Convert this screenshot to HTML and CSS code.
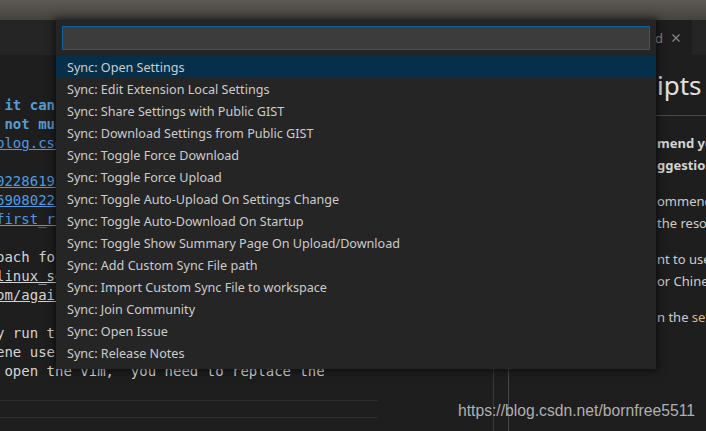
FILE: index.html
```html
<!DOCTYPE html>
<html lang="en">
<head>
    <meta charset="UTF-8">
    <meta name="viewport" content="width=device-width, initial-scale=1.0">
    <title>Sync - Command Palette</title>
    <link rel="stylesheet" href="styles.css">
</head>
<body>
    <div class="titlebar"></div>
    <div class="workbench">
        <div class="group group-left">
            <div class="tabs"></div>
            <div class="editor">
                <div class="code">
                    <div class="line"></div>
                    <div class="line"></div>
                    <div class="line bold"> it can save your settings to GitHub</div>
                    <div class="line bold"> not much to configure after install</div>
                    <div class="line link">blog.csdn.net/bornfree5511/article/details</div>
                    <div class="line"></div>
                    <div class="line link">0228619352/settings-sync-gist-token</div>
                    <div class="line link">6908022175/settings-sync-gist-token</div>
                    <div class="line link">first_run_settings_sync_extension</div>
                    <div class="line"></div>
                    <div class="line">oach for the vim extension in vscode</div>
                    <div class="line under">linux_setup_for_vim_keybindings</div>
                    <div class="line under">om/again/vscode-vim/issues/1024</div>
                    <div class="line"></div>
                    <div class="line">y run the command in the terminal</div>
                    <div class="line">ene use the keybindings file to</div>
                    <div class="line"> open the vim,  you need to replace the</div>
                    <div class="line"></div>
                    <div class="rule"></div>
                </div>
                <div class="scrollbar"></div>
            </div>
        </div>
        <div class="group group-right">
            <div class="tabs">
                <div class="tab">
                    <span class="tab-label">Preview README.md</span>
                    <svg class="tab-close" width="8" height="8" viewBox="0 0 8 8">
                        <path d="M0.5 0.5 L7.5 7.5 M7.5 0.5 L0.5 7.5" stroke="#8a8a8a" stroke-width="1.2" fill="none"/>
                    </svg>
                </div>
            </div>
            <div class="preview">
                <h1>ipts</h1>
                <hr>
                <p><b>mend your settings</b><br><b>ggestions are welcome</b></p>
                <p>ommended to sync<br>the resources folder</p>
                <p>nt to use the Chinese<br>or Chinese version</p>
                <p>n the <span class="code-span">settings.json</span></p>
            </div>
        </div>
    </div>

    <!-- 命令面板 -->
    <div class="quick-open">
        <div class="quick-input"></div>
        <ul class="quick-list">
            <li class="active">Sync: Open Settings</li>
            <li>Sync: Edit Extension Local Settings</li>
            <li>Sync: Share Settings with Public GIST</li>
            <li>Sync: Download Settings from Public GIST</li>
            <li>Sync: Toggle Force Download</li>
            <li>Sync: Toggle Force Upload</li>
            <li>Sync: Toggle Auto-Upload On Settings Change</li>
            <li>Sync: Toggle Auto-Download On Startup</li>
            <li>Sync: Toggle Show Summary Page On Upload/Download</li>
            <li>Sync: Add Custom Sync File path</li>
            <li>Sync: Import Custom Sync File to workspace</li>
            <li>Sync: Join Community</li>
            <li>Sync: Open Issue</li>
            <li>Sync: Release Notes</li>
        </ul>
    </div>

    <div class="watermark">https://blog.csdn.net/bornfree5511</div>
</body>
</html>
```

FILE: styles.css
```css
* {
    margin: 0;
    padding: 0;
    box-sizing: border-box;
}
body {
    width: 706px;
    height: 431px;
    overflow: hidden;
    position: relative;
    background-color: #1e1e1e;
    font-family: "Noto Sans", sans-serif;
}
.titlebar {
    height: 20px;
    background: linear-gradient(#5c5953, #45433f);
}
.workbench {
    display: flex;
    height: 411px;
}
.group {
    display: flex;
    flex-direction: column;
    overflow: hidden;
}
.group-left {
    width: 508px;
}
.group-right {
    flex: 1;
    border-left: 1px solid #474747;
}
.tabs {
    height: 35px;
    background-color: #252526;
    display: flex;
}
.editor {
    flex: 1;
    display: flex;
}
/* 左侧代码区 */
.code {
    flex: 1;
    overflow: hidden;
    padding-top: 3px;
    font-family: "DejaVu Sans Mono", monospace;
    font-size: 14px;
    color: #d4d4d4;
}
.line {
    height: 19px;
    line-height: 19px;
    margin-left: -4px;
    white-space: pre;
}
.line.bold {
    color: #569cd6;
    font-weight: bold;
}
.line.link {
    color: #4f9ae0;
    text-decoration: underline;
}
.line.under {
    text-decoration: underline;
}
.rule {
    width: 378px;
    height: 18px;
    border-top: 1px solid #2c2c2c;
    border-bottom: 1px solid #2c2c2c;
}
.scrollbar {
    width: 15px;
    border-left: 1px solid #383838;
}
/* 右侧预览 */
.tab {
    width: 183px;
    height: 35px;
    background-color: #1e1e1e;
    display: flex;
    align-items: center;
    justify-content: flex-end;
    padding-right: 12px;
    white-space: nowrap;
    overflow: hidden;
}
.tab-label {
    font-size: 13px;
    color: #8a8a8a;
}
.tab-close {
    margin-left: 9px;
    flex-shrink: 0;
}
.preview {
    flex: 1;
    padding-left: 148px;
    white-space: nowrap;
    overflow: hidden;
    color: #cccccc;
    font-size: 13px;
}
.preview h1 {
    margin-top: 14px;
    font-size: 26px;
    line-height: 32px;
    font-weight: normal;
    color: #e0e0e0;
}
.preview hr {
    margin-top: 14px;
    margin-left: -10px;
    border: none;
    border-top: 1px solid #4a4a4a;
}
.preview p {
    line-height: 22px;
    margin-top: 14px;
}
.preview p:first-of-type {
    margin-top: 16px;
}
.preview b {
    color: #d4d4d4;
}
.code-span {
    color: #d7ba7d;
}
/* 命令面板 */
.quick-open {
    position: absolute;
    left: 56px;
    top: 20px;
    width: 600px;
    height: 349px;
    background-color: #252526;
    padding-top: 6px;
    box-shadow: 0 0 8px 2px rgba(0, 0, 0, 0.55);
}
.quick-input {
    margin: 0 6px;
    height: 24px;
    background-color: #3c3c3c;
    border: 1px solid #0e639c;
}
.quick-list {
    list-style: none;
    margin-top: 6px;
}
.quick-list li {
    height: 22px;
    line-height: 23px;
    padding-left: 11px;
    font-size: 12.6px;
    color: #cccccc;
}
.quick-list li.active {
    background-color: #062f4a;
}
.watermark {
    position: absolute;
    left: 458px;
    top: 402px;
    font-family: "Liberation Sans", Arial, sans-serif;
    font-size: 15.7px;
    line-height: 18px;
    color: #b0b0b0;
}
```
